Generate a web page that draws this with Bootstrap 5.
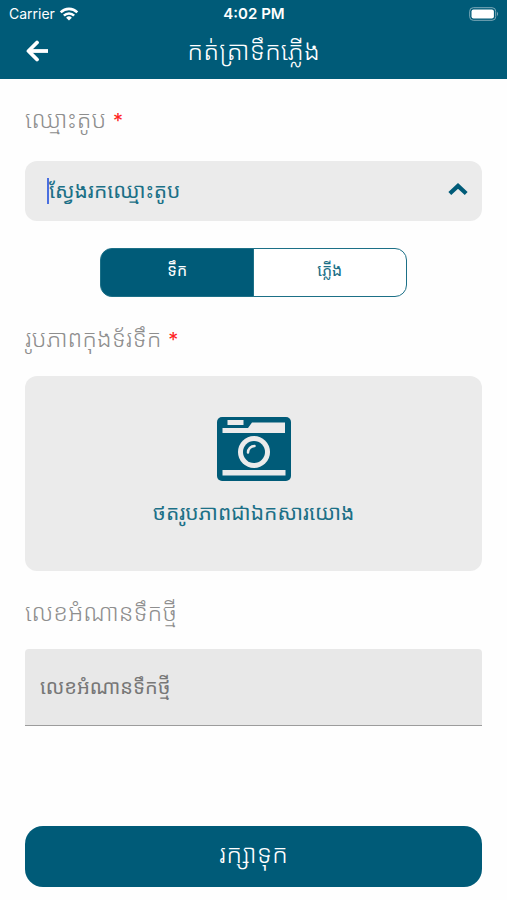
<!DOCTYPE html>
<html lang="km">
<head>
<meta charset="utf-8">
<meta name="viewport" content="width=device-width, initial-scale=1">
<title>កត់ត្រាទឹកភ្លើង</title>
<link href="https://cdn.jsdelivr.net/npm/bootstrap@5.3.0/dist/css/bootstrap.min.css" rel="stylesheet">
<style>
:root { --teal: #005b78; --panel: #ebebeb; }
body { font-family: Inter, "Noto Sans Khmer", "Khmer OS", "Noto Sans", sans-serif; background: #fefefe; }
.topbar { background: var(--teal); }
.status { height: 27px; font-size: 14px; padding: 0 8px 0 9px; }
.status .clock { font-size: 15px; line-height: 20px; }
.titlebar { height: 52px; padding: 0 25px 4px; }
.titlebar h1, .save { font-size: 26px; line-height: 32px; font-weight: 300; }
.field-label { color: #8e8e8e; font-size: 24px; line-height: 32px; font-weight: 300; margin-bottom: 20px; }
.field-label span { color: #f22; font-size: 20px; font-weight: 400; }
.form-area { padding: 25px 25px 13px; }
.search { background: var(--panel); border-radius: 12px; height: 60px; padding: 0 14px 0 22px; }
.search input { color: var(--teal); font-size: 21px; }
.search input::placeholder { color: #1c7087; opacity: 1; }
.caret { width: 2px; height: 26px; background: #4a6fe0; }
.switcher { width: 67%; height: 49px; margin: 27px 0 26px; }
.switcher .btn {
  --bs-btn-color: #1c7087; --bs-btn-border-color: #1c7087; --bs-btn-border-radius: 12px;
  --bs-btn-active-bg: var(--teal); --bs-btn-active-color: #fff; --bs-btn-active-border-color: #1c7087;
  font-size: 16px; line-height: 24px; padding: 0 0 5px; background-color: #fff;
}
.switcher .btn-check:checked + .btn { background-color: var(--teal); }
.photo { background: var(--panel); border-radius: 12px; height: 195px; margin-bottom: 26px; padding: 0 0 2px; color: #1c7087; font-size: 21px; line-height: 32px; }
.reading { background: #e8e8e8; border-bottom: 1px solid #9c9c9c !important; border-radius: 4px 4px 0 0; height: 77px; padding: 0 15px; font-size: 20px; }
.reading::placeholder { color: #777; opacity: 1; }
.save { background: var(--teal) !important; border-radius: 18px; height: 61px; padding: 0 0 5px; }
</style>
</head>
<body class="d-flex flex-column min-vh-100">
<header class="topbar text-white">
  <div class="status row g-0 align-items-center">
    <div class="col d-flex align-items-center gap-1">
      <span>Carrier</span>
      <svg width="20" height="14" viewBox="0 0 20 14" fill="none" stroke="#fff" stroke-width="2.6" aria-hidden="true"><path d="M1.7 5.3a11.8 11.8 0 0 1 16.6 0M4.9 8.6a7.2 7.2 0 0 1 10.2 0"/><path d="M10 13.6 7.1 10.8a4.1 4.1 0 0 1 5.8 0Z" fill="#fff" stroke="none"/></svg>
    </div>
    <div class="col-auto clock fw-semibold">4:02 PM</div>
    <div class="col d-flex justify-content-end">
      <svg width="30" height="14" viewBox="0 0 30 14" aria-hidden="true"><rect x=".7" y=".7" width="26" height="12.6" rx="3.6" fill="none" stroke="#7fabba"/><rect x="2.5" y="2.5" width="22.4" height="9" rx="2" fill="#fff"/><path d="M28 4.8q2 2.2 0 4.4Z" fill="#7fabba"/></svg>
    </div>
  </div>
  <div class="titlebar row g-0 align-items-center">
    <div class="col">
      <button type="button" class="btn p-0 border-0 d-flex" aria-label="Back">
        <svg width="24" height="22" viewBox="0 0 24 22" fill="none" stroke="#fff" stroke-width="3.8" stroke-linecap="round" stroke-linejoin="round"><path d="M12 2.500 3.500 11l8.500 8.500"/><path d="M4 11H23" stroke-linecap="butt"/></svg>
      </button>
    </div>
    <h1 class="col-auto m-0">កត់ត្រាទឹកភ្លើង</h1>
    <div class="col"></div>
  </div>
</header>

<form class="form-area d-flex flex-column flex-grow-1">
  <label for="booth" class="field-label mb-4">ឈ្មោះតូប <span>*</span></label>
  <div class="search d-flex align-items-center">
    <i class="caret"></i>
    <input id="booth" type="text" class="flex-grow-1 border-0 bg-transparent p-0" placeholder="ស្វែងរកឈ្មោះតូប">
    <button type="button" class="btn p-0 border-0 d-flex" aria-label="Close list">
      <svg width="20" height="18" viewBox="0 0 20 18" fill="none" stroke="#005b78" stroke-width="4.200"><path d="m1.800 11.500 8.200-7.600 8.200 7.600"/></svg>
    </button>
  </div>

  <div class="switcher btn-group align-self-center" role="group" aria-label="ទឹកភ្លើង">
    <input type="radio" class="btn-check" name="kind" id="water" checked>
    <label class="btn w-50 d-flex align-items-center justify-content-center" for="water">ទឹក</label>
    <input type="radio" class="btn-check" name="kind" id="power">
    <label class="btn w-50 d-flex align-items-center justify-content-center" for="power">ភ្លើង</label>
  </div>

  <label for="photo" class="field-label">រូបភាពកុងទ័រទឹក <span>*</span></label>
  <button id="photo" type="button" class="photo btn border-0 d-flex flex-column align-items-center justify-content-center gap-3">
    <svg width="74" height="64" viewBox="0 0 74 64" aria-hidden="true">
      <rect width="74" height="64" rx="5" fill="#005b78"/>
      <path d="M10.500 3h16v5h-16ZM5.500 11H31l4-5.500h33V16H5.500ZM5.500 53h63v5.500h-63Z" fill="#ebebeb"/>
      <circle cx="37" cy="35" r="16" fill="#ebebeb"/><circle cx="37" cy="35" r="11" fill="#005b78"/>
      <path d="M31 35.500a6.500 6.500 0 0 1 6.500-6.500" fill="none" stroke="#ebebeb" stroke-width="2.500" stroke-linecap="round"/>
    </svg>
    <span>ថតរូបភាពជាឯកសារយោង</span>
  </button>

  <label for="reading" class="field-label">លេខអំណានទឹកថ្មី</label>
  <input id="reading" type="text" class="reading border-0 w-100" placeholder="លេខអំណានទឹកថ្មី">

  <button type="submit" class="save btn border-0 text-white w-100 mt-auto">រក្សាទុក</button>
</form>
<script src="https://cdn.jsdelivr.net/npm/bootstrap@5.3.0/dist/js/bootstrap.bundle.min.js"></script>
</body>
</html>
